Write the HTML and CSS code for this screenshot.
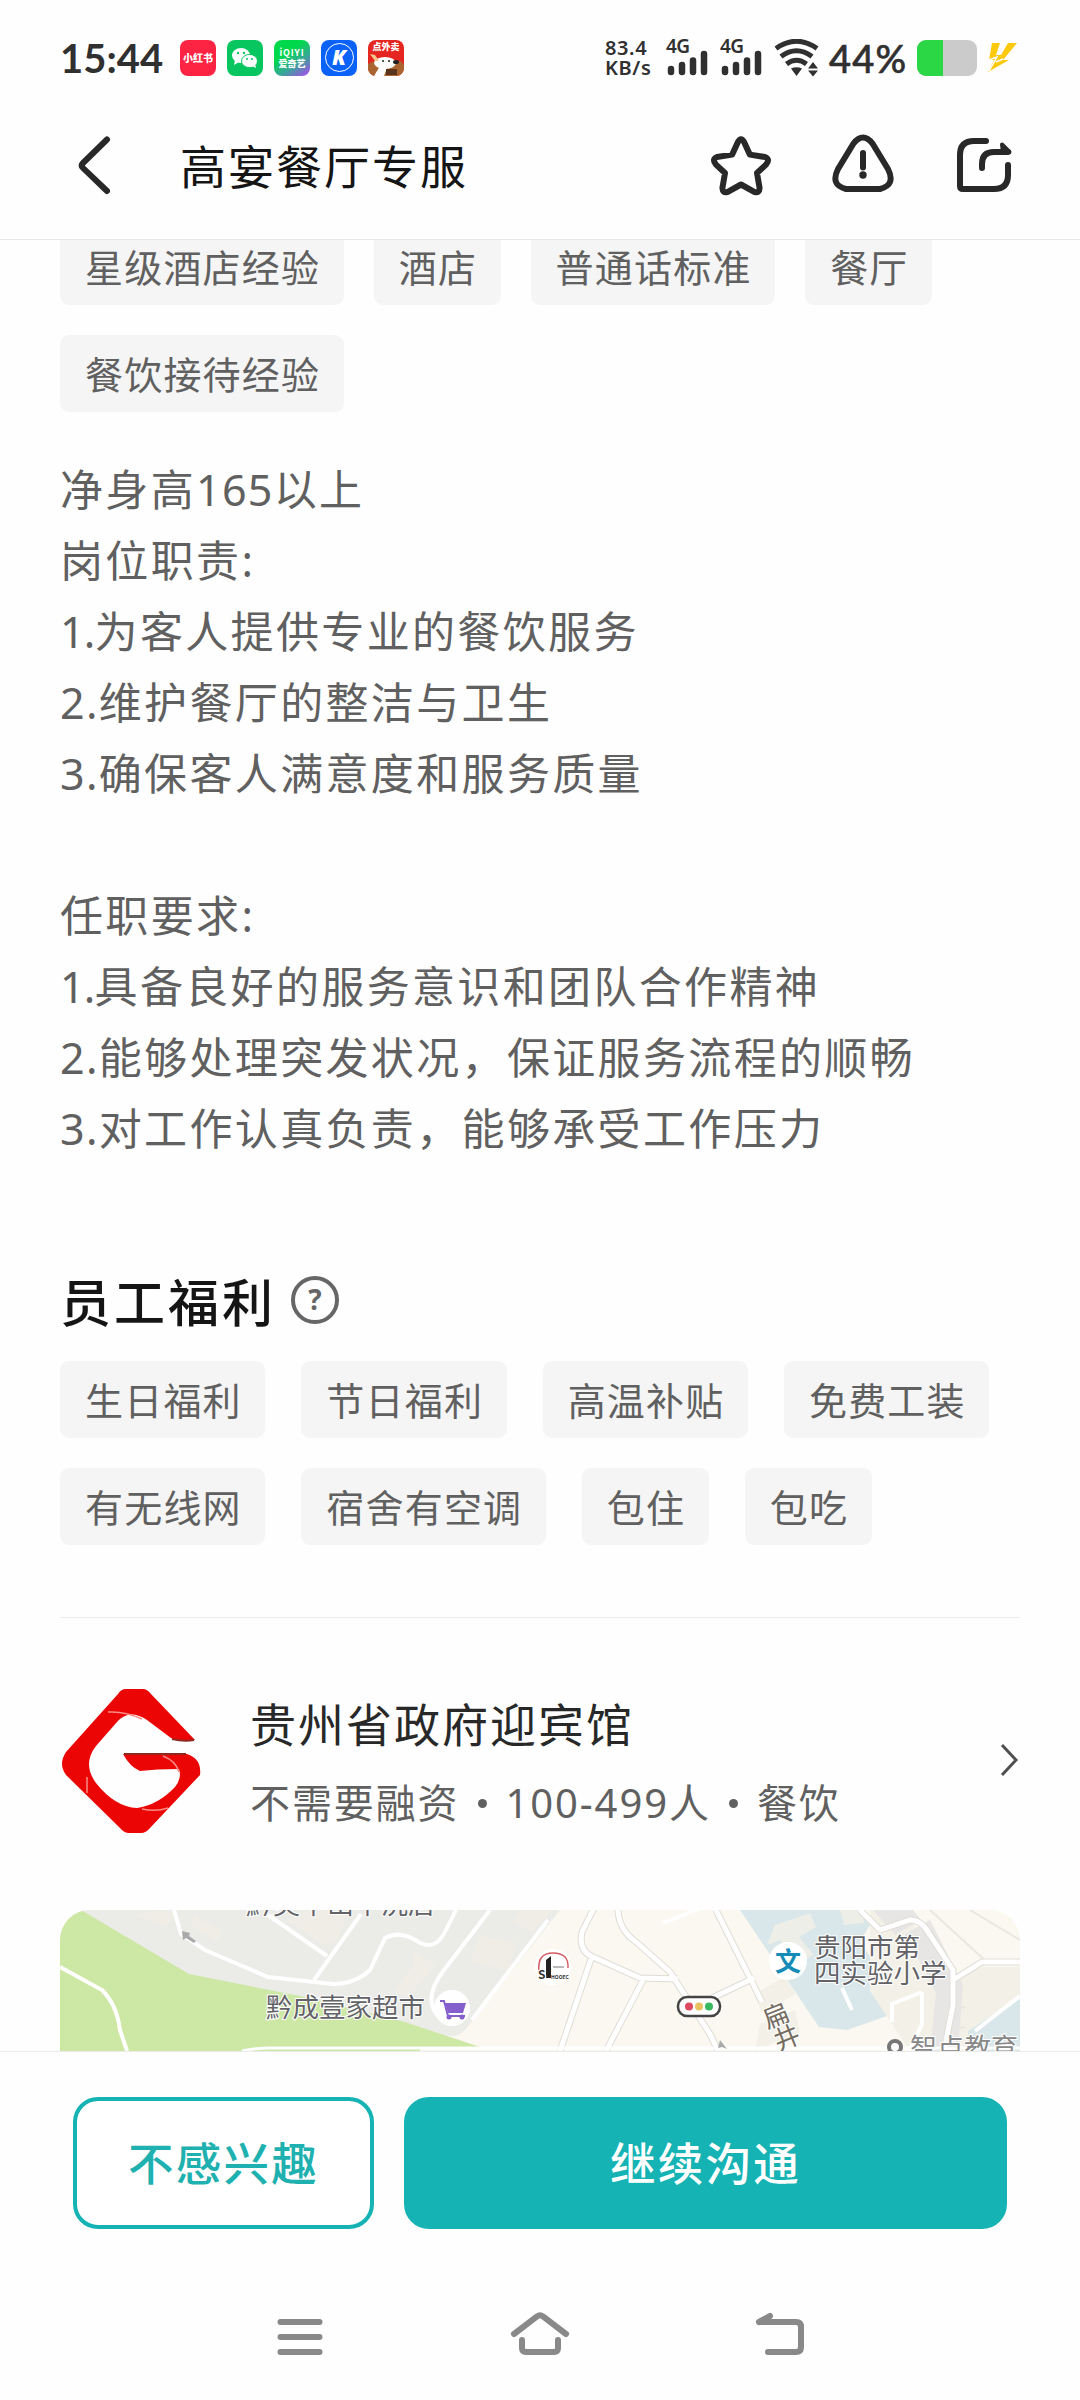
FILE: index.html
```html
<!DOCTYPE html>
<html lang="zh-CN">
<head>
    <meta charset="UTF-8">
    <meta name="viewport" content="width=device-width, initial-scale=1.0">
    <title>高宴餐厅专服</title>
    <link rel="stylesheet" href="styles.css">
</head>
<body>
    <div class="status-bar">
        <span class="time">15:44</span>
        <div class="apps">
            <span class="app app-red">小红书</span>
            <span class="app app-wechat">
                <svg width="36" height="36" viewBox="0 0 36 36">
                    <ellipse cx="14" cy="15.500" rx="9" ry="7.500" fill="#fff"/>
                    <path d="M8 20l-1 5 5-3z" fill="#fff"/>
                    <ellipse cx="22.500" cy="21" rx="8" ry="6.600" fill="#fff" stroke="#07c65f" stroke-width="1"/>
                    <path d="M25 26l4 2-1-4z" fill="#fff"/>
                    <circle cx="11" cy="13" r="1.200" fill="#07c65f"/>
                    <circle cx="17" cy="13" r="1.200" fill="#07c65f"/>
                    <circle cx="20" cy="19" r="1" fill="#07c65f"/>
                    <circle cx="25" cy="19" r="1" fill="#07c65f"/>
                </svg>
            </span>
            <span class="app app-iqiyi"><b class="latin">iQIYI</b><b>爱奇艺</b></span>
            <span class="app app-k"><i>K</i></span>
            <span class="app app-food">
                <b>点外卖</b>
                <svg width="36" height="22" viewBox="0 0 36 22">
                    <path d="M0 10Q8 5 14 7L33 7Q36 10 36 12V22H0z" fill="#a9642f"/>
                    <ellipse cx="17" cy="9" rx="11" ry="6" fill="#fff"/>
                    <path d="M7 7L2 0l5 1 4 6z" fill="#f4c58c"/>
                    <path d="M12 12l-6 10h10l3-8z" fill="#fff"/>
                    <circle cx="15" cy="7" r="1" fill="#222"/>
                    <circle cx="21" cy="7" r="1" fill="#222"/>
                    <ellipse cx="28" cy="8" rx="3" ry="2" fill="#222"/>
                    <rect x="18" y="15" width="11" height="6" fill="#5b351b"/>
                </svg>
            </span>
        </div>
        <div class="speed"><span>83.4</span><span>KB/s</span></div>
        <div class="signal">
            <span>4G</span>
            <svg width="42" height="26" viewBox="0 0 42 26"><path d="M4 19v3M15 15v7M26 10.500v11.500M37 4v18" stroke="#303030" stroke-width="6.500" stroke-linecap="round"/></svg>
        </div>
        <div class="signal">
            <span>4G</span>
            <svg width="42" height="26" viewBox="0 0 42 26"><path d="M4 19v3M15 15v7M26 10.500v11.500M37 4v18" stroke="#303030" stroke-width="6.500" stroke-linecap="round"/></svg>
        </div>
        <svg class="wifi" width="46" height="38" viewBox="0 0 46 38">
            <path d="M2 9.500Q22.500-5 43 9.500M7 17.500Q22.500 6 38 17.500M12.500 25Q22.500 17.500 32.500 25" fill="none" stroke="#303030" stroke-width="5"/>
            <path d="M17 29.500Q22.500 27 28 29.500L22.500 37z" fill="#303030"/>
            <path d="M34 29.500h10l-5-6.500zM34 31.500h10l-5 6z" fill="#303030"/>
        </svg>
        <span class="percent">44%</span>
        <div class="battery"><div class="level"></div></div>
        <svg class="bolt" width="31" height="31" viewBox="0 0 31 31">
            <path d="M5 1h8L9 13h5L21 1h9L16 18h6L1 30l6-12H2z" fill="#fcc90d"/>
            <path d="M2 18l8-3-8 14M16 17l-7 3" stroke="#fff" stroke-width="1.500" fill="none"/>
        </svg>
    </div>

    <header class="header">
        <svg class="back" width="36" height="60" viewBox="0 0 36 60"><path d="M30 3.500L6 27Q3.500 29.500 6 32L30 55" fill="none" stroke="#282828" stroke-width="6" stroke-linecap="round"/></svg>
        <h1>高宴餐厅专服</h1>
        <div class="actions">
            <svg width="64" height="64" viewBox="0 0 64 64">
                <path d="M28.700 8.400Q32 2 35.300 8.400L40.800 20.600L56 23Q61.500 25.200 57 30.600L48 39L50.600 54Q50.500 59.500 45.200 57.800L32 50.500L18.800 57.800Q13.500 59.500 13.400 54L16 39L7 30.600Q2.500 25.200 8 23L23.200 20.600Z"/>
            </svg>
            <svg width="64" height="64" viewBox="0 0 64 64">
                <path d="M22.500 9.500Q32-2.500 41.500 9.500L57 35Q65 51 49 55H15Q-1 51 7 35Z"/>
                <path d="M32 19v14.500"/><circle cx="32" cy="41" r="3.700" class="dot"/>
            </svg>
            <svg width="64" height="64" viewBox="0 0 64 64">
                <path d="M33 7H21Q7 7 7 21V52Q7 55 10 55H41Q55 55 55 41V31M29 34V30Q29 18 41 18H55"/>
                <path d="M49 10.500L56.500 18H50z" class="tip"/>
            </svg>
        </div>
    </header>

    <main class="content">
        <div class="tags skills">
            <span class="tag">星级酒店经验</span>
            <span class="tag">酒店</span>
            <span class="tag">普通话标准</span>
            <span class="tag">餐厅</span>
            <span class="tag">餐饮接待经验</span>
        </div>

        <div class="desc">
            <p>净身高<span class="num">165</span>以上</p>
            <p>岗位职责:</p>
            <p><span class="one">1.</span>为客人提供专业的餐饮服务</p>
            <p><span class="num">2.</span>维护餐厅的整洁与卫生</p>
            <p><span class="num">3.</span>确保客人满意度和服务质量</p>
            <p>&nbsp;</p>
            <p>任职要求:</p>
            <p><span class="one">1.</span>具备良好的服务意识和团队合作精神</p>
            <p><span class="num">2.</span>能够处理突发状况，保证服务流程的顺畅</p>
            <p><span class="num">3.</span>对工作认真负责，能够承受工作压力</p>
        </div>

        <div class="title">
            <h2>员工福利</h2>
            <span class="help">?</span>
        </div>
        <div class="tags benefits">
            <span class="tag">生日福利</span>
            <span class="tag">节日福利</span>
            <span class="tag">高温补贴</span>
            <span class="tag">免费工装</span>
            <span class="tag">有无线网</span>
            <span class="tag">宿舍有空调</span>
            <span class="tag">包住</span>
            <span class="tag">包吃</span>
        </div>

        <div class="company">
            <svg width="144" height="144" viewBox="0 0 144 144">
                <path d="M58 5Q61 0 66 0H83Q87 0 91 5L135 51Q118 53 111 49L87 31Q69 19 57 33L36 57Q22 75 36 94Q55 118 77 119Q98 116 115 98Q122 89 119 80Q96 80 80 82Q70 78 63 65H127Q142 70 140 86L90 139Q86 144 81 144H69Q64 144 60 139L6 86Q-2 75 6 63Z" fill="#ec0505"/>
                <path d="M48 23Q65 22 82 30M27 88V104M82 120Q96 123 108 119M103 67Q116 72 119 83" fill="none" stroke="#f98c86" stroke-width="1.500"/>
                <path d="M64 65H126M112 50Q124 53 134 51" fill="none" stroke="#8f2920" stroke-width="2"/>
            </svg>
            <div class="company-info">
                <h3>贵州省政府迎宾馆</h3>
                <p>不需要融资<i></i>100-499人<i></i>餐饮</p>
            </div>
            <svg class="arrow" width="20" height="34" viewBox="0 0 20 34"><path d="M2 2l14 15L2 32" fill="none" stroke="#505050" stroke-width="3"/></svg>
        </div>

        <div class="map">
            <svg width="960" height="141" viewBox="0 0 960 141">
                <rect width="960" height="141" fill="#faf8f0"/>
                <!-- blocks -->
                <path d="M0 0H500L405 120Q395 130 380 124L250 95L130 68L0 0z" fill="#ebebe8"/>
                <path d="M75 4l22-4 23 4-15 13zM135 6l28 15-6 10-26-15zM228 10l20-10h40l-10 30-13 6zM420 25l37 8-8 28-38-10zM352 40l24 15-28 32-14-6 20-27zM460 0h32l-20 22-20-10z" fill="#efede6"/>
                <path d="M0 0H21L129 64L240 86L345 112L423 138H360V141H0z" fill="#cde7a4"/>
                <path d="M680 0h118l12 15-10 17 47 67-60 21-28-3z" fill="#d9e7ea"/>
                <path d="M715 15l35-12 6 14-17 10 15 18-23 10-10-25-14 5zM780 0h22l2 13-20 2z" fill="#eeeee8"/>
                <path d="M810 0h35l26 43 22 26 30-12h37v84H850l-40-60zM695 83l30-16 11 17-35 19zM700 114l35-14 5 22-45 19z" fill="#f3f1e7"/>
                <path d="M813 0h40l8 10-26 15zM845 24l25-14 33 65-5 66h-28l6-58z" fill="#e7e6e4"/>
                <path d="M908 121l52-34v54h-52z" fill="#d9e7ea"/>
                <path d="M870 0l60 55M910 0l50 30M885 100l20-3M885 120l20-3" stroke="#e9e7df" stroke-width="2"/>
                <!-- roads, dark edge below the white one -->
                <g fill="none" stroke="#dfddd7" stroke-width="7">
                    <path d="M534-2L522 22Q518 41 533 47L580 68L618 69M558 0Q559 20 576 32L610 62L650 124L658 141M656 0L702 92M531 49L500 141M583 70L546 141M800 0L820 20M820 20L850 10Q862 10 870 25L893 60V95L884 141M893 70L922 52H960M694 68L652 88"/>
                </g>
                <g fill="none" stroke="#fff" stroke-width="5">
                    <path d="M534-2L522 22Q518 41 533 47L580 68L618 69M558 0Q559 20 576 32L610 62L650 124L658 141M656 0L702 92M531 49L500 141M583 70L546 141M800 0L820 20M820 20L850 10Q862 10 870 25L893 60V95L884 141M893 70L922 52H960M694 68L652 88"/>
                    <path d="M862 82v32l-13 27M862 82l-30 12v18M782 78l10 22M915 121L960 86M603 13l35-14" stroke-width="4"/>
                </g>
                <g fill="none" stroke="#fff" stroke-width="4">
                    <path d="M114 0L121 24L145 40L208 67L273 74Q295 74 310 60L325 28Q340 20 357 31Q375 43 386 20L396 0M208 5L267 46M301 4L254 70M430 0L384 60Q361 90 380 108M488 10L427 90L412 110"/>
                    <path d="M0 57L42 80Q57 95 60 120L67 141"/>
                </g>
                <path d="M182 141Q195 138 210 138H960" fill="none" stroke="#fff" stroke-width="3"/>
                <path d="M122 21l8 2-1 3 7 5-2 2-8-5-3 2z" fill="#aaa"/>
                <path d="M660 130l-2 8 4-1 5 2z" fill="#aaa"/>
                <circle cx="392" cy="98" r="18" fill="#fff"/>
                <path d="M380 91h4l4 15h17" fill="none" stroke="#8560cd" stroke-width="2"/>
                <path d="M385 93h21l-3 10h-15z" fill="#8560cd"/>
                <circle cx="389" cy="107" r="2.500" fill="#8560cd"/><circle cx="402" cy="107" r="2.500" fill="#8560cd"/>
                <circle cx="493" cy="57" r="18" fill="#fff"/>
                <path d="M479 61Q477 43 493 43Q509 43 508 58" fill="none" stroke="#d65b64" stroke-width="1.500"/>
                <path d="M486 50l5-4v22h-5z" fill="#222"/>
                <path d="M493 57h11" stroke="#777" stroke-width="1"/>
                <rect x="618" y="87" width="42" height="19" rx="9" fill="#fff" stroke="#444" stroke-width="2.500"/>
                <circle cx="629" cy="96.500" r="4" fill="#dd4961"/><circle cx="639" cy="96.500" r="4" fill="#eac160"/><circle cx="649" cy="96.500" r="4" fill="#38b861"/>
                <circle cx="728" cy="51" r="19" fill="#fff"/>
                <circle cx="835" cy="137" r="6" fill="#fff" stroke="#777" stroke-width="4"/>
                <g class="map-text">
                    <text x="186" y="4" font-size="27">黔灵半山半洗店</text>
                    <text x="206" y="107" font-size="26.500">黔成壹家超市</text>
                    <text x="754" y="47" font-size="26.500">贵阳市第</text>
                    <text x="754" y="73" font-size="26.500">四实验小学</text>
                    <text x="850" y="148" font-size="27" fill="#888">智点教育</text>
                    <text x="703" y="115" font-size="26" fill="#766d62" transform="rotate(-22 716 106)">扁</text>
                    <text x="714" y="137" font-size="26" fill="#766d62" transform="rotate(-22 727 128)">井</text>
                    <text x="715" y="61" font-size="26" fill="#168bb5" font-weight="700">文</text>
                    <text x="478" y="69" font-size="12" fill="#333" font-weight="700">S</text>
                    <text x="491" y="69" font-size="5" fill="#333" font-weight="700" stroke="none">HOOEC</text>
                </g>
            </svg>
        </div>
    </main>

    <footer class="bottom">
        <button class="btn btn-line">不感兴趣</button>
        <button class="btn btn-fill">继续沟通</button>
    </footer>

    <nav class="nav">
        <svg width="60" height="60" viewBox="0 0 60 60"><path d="M10.500 13h39M10.500 28h39M10.500 43h39"/></svg>
        <svg width="60" height="60" viewBox="0 0 60 60"><path d="M4 25L27 7.500Q30 5 33 7.500L56 25M12 31v8q0 4 4 4h28q4 0 4-4V31"/></svg>
        <svg width="60" height="60" viewBox="0 0 60 60"><path d="M9 13H46Q51 13 51 18V38Q51 43 46 43H18M9 13L20 7"/><path d="M9 13L20 7v6z" class="tip"/></svg>
    </nav>
</body>
</html>
```

FILE: styles.css
```css
*{
    margin: 0;
    padding: 0;
    box-sizing: border-box;
}
body {
    width: 1080px;
    height: 2400px;
    display: flex;
    flex-direction: column;
    overflow: hidden;
    background: #fefefe;
    font-family: "Noto Sans", "Noto Sans CJK SC", sans-serif;
}
svg {
    display: block;
    flex: none;
}
h1, h2, h3 {
    font-weight: 400;
}

/* status bar */
.status-bar {
    height: 98px;
    padding: 17px 60px 0 60px;
    display: flex;
    align-items: center;
    color: #303030;
    white-space: nowrap;
    flex: none;
}
.time {
    width: 120px;
    font-family: Lato, sans-serif;
    font-size: 40px;
    font-weight: 700;
    line-height: 50px;
}
.apps {
    display: flex;
    gap: 11px;
    width: 425px;
}
.app {
    width: 36px;
    height: 36px;
    border-radius: 8px;
    overflow: hidden;
    color: #fff;
    display: flex;
    flex-direction: column;
    align-items: center;
    justify-content: center;
    font-family: "Noto Sans CJK SC", sans-serif;
    font-weight: 900;
}
.app-red {
    background: #fc2442;
    font-size: 10px;
}
.app-wechat {
    background: #07c65f;
}
.app-iqiyi {
    background: linear-gradient(145deg, #00d84b 35%, #3aa59a 65%, #a052e8 95%);
    font-size: 9px;
    line-height: 11px;
}
.app-iqiyi .latin {
    font-weight: 700;
    letter-spacing: 0.8px;
}
.app-k {
    background: #0a62f8;
}
.app-k i {
    width: 29px;
    height: 29px;
    border: 1.5px solid #fff;
    border-radius: 50%;
    font-family: "Open Sans", sans-serif;
    font-size: 21px;
    font-weight: 800;
    line-height: 26px;
    text-align: center;
}
.app-food {
    background: #e5251f;
    font-size: 9px;
    line-height: 14px;
}
.speed {
    width: 61px;
    display: flex;
    flex-direction: column;
    font-size: 20px;
    font-weight: 600;
    letter-spacing: 0.6px;
    line-height: 20px;
}
.signal {
    width: 54px;
    height: 38px;
    position: relative;
    padding: 11px 0 0 1px;
}
.signal span {
    position: absolute;
    left: 0;
    top: -2px;
    font-size: 19px;
    font-weight: 600;
    line-height: 18px;
    letter-spacing: -0.5px;
}
.wifi {
    margin-right: 9px;
}
.percent {
    width: 88px;
    font-family: Lato, sans-serif;
    font-size: 38px;
    font-weight: 500;
    letter-spacing: 1.2px;
    -webkit-text-stroke: 0.6px #303030;
}
.battery {
    width: 60px;
    height: 36px;
    border-radius: 9px;
    background: #cbcbcb;
    overflow: hidden;
}
.battery .level {
    width: 26px;
    height: 36px;
    background: #2bd744;
}
.bolt {
    margin-left: 10px;
}

/* header */
.header {
    height: 142px;
    padding: 0 63px 5px 77px;
    display: flex;
    align-items: center;
    border-bottom: 1px solid #e8e8e8;
    flex: none;
}
.header h1 {
    margin-left: 67px;
    font-size: 46px;
    letter-spacing: 2px;
    color: #151515;
    line-height: 60px;
}
.actions {
    margin-left: auto;
    display: flex;
    gap: 58px;
}
.actions svg {
    fill: none;
    stroke: #282828;
    stroke-width: 6;
    stroke-linecap: round;
    stroke-linejoin: round;
}
.actions .dot {
    fill: #282828;
    stroke: none;
}
.actions .tip {
    fill: #282828;
    stroke-width: 4;
}

/* page content, scrolled under the header */
.content {
    height: 1811px;
    padding: 0 60px;
    overflow: hidden;
    flex: none;
}
.tags {
    display: flex;
    flex-wrap: wrap;
    gap: 30px;
}
.skills {
    margin-top: -12px;
}
.benefits {
    column-gap: 36px;
}
.tag {
    height: 77px;
    padding: 0 23.5px 0 25px;
    border-radius: 9px;
    background: #f5f5f5;
    color: #606060;
    font-size: 38px;
    letter-spacing: 1.2px;
    line-height: 78px;
}
.desc {
    margin-top: 42px;
    font-size: 43px;
    letter-spacing: 2.35px;
    line-height: 71px;
    color: #606060;
    white-space: nowrap;
}
.desc .num {
    letter-spacing: 1.3px;
}
.desc .one {
    letter-spacing: -0.8px;
}
.title {
    display: flex;
    align-items: center;
    gap: 15px;
    height: 80px;
    margin-top: 96px;
    margin-bottom: 21px;
}
.title h2 {
    font-size: 51px;
    font-weight: 500;
    letter-spacing: 3px;
    color: #151515;
}
.help {
    width: 48px;
    height: 48px;
    border: 4px solid #666;
    border-radius: 50%;
    color: #666;
    font-size: 28px;
    font-weight: 700;
    line-height: 39px;
    text-align: center;
}
.company {
    margin-top: 72px;
    padding-top: 71px;
    border-top: 1px solid #ebebeb;
    display: flex;
    align-items: flex-start;
    height: 220px;
}
.company-info {
    margin: -1px 0 0 46px;
}
.company-info h3 {
    font-size: 46px;
    letter-spacing: 2px;
    line-height: 72px;
    color: #282828;
}
.company-info p {
    display: flex;
    align-items: center;
    margin-top: 7px;
    font-size: 40px;
    letter-spacing: 1.9px;
    line-height: 72px;
    color: #606060;
}
.company-info i {
    width: 9px;
    height: 9px;
    margin: 0 18.5px;
    border-radius: 50%;
    background: #606060;
}
.arrow {
    margin: 54px 0 0 auto;
}
.map {
    margin-top: 73px;
    height: 141px;
    border-radius: 30px 30px 0 0;
    overflow: hidden;
}
.map-text {
    font-family: "Noto Sans CJK SC", sans-serif;
    fill: #626267;
    paint-order: stroke;
    stroke: #fff;
    stroke-width: 2px;
}

/* bottom buttons */
.bottom {
    height: 220px;
    padding: 45px 73px 0;
    border-top: 1px solid #ebebeb;
    display: flex;
    gap: 30px;
    flex: none;
}
.btn {
    height: 132px;
    border-radius: 25px;
    border: 4px solid #16b3b4;
    font-family: "Noto Sans CJK SC", sans-serif;
    font-size: 45.5px;
    font-weight: 500;
    letter-spacing: 2.3px;
    padding-bottom: 4px;
}
.btn-line {
    width: 301px;
    background: #fff;
    color: #1fb0b0;
}
.btn-fill {
    flex: 1;
    background: #16b3b4;
    color: #fff;
}

/* system navigation */
.nav {
    display: flex;
    justify-content: center;
    gap: 180px;
    padding-top: 38px;
}
.nav svg {
    fill: none;
    stroke: #898989;
    stroke-width: 6;
    stroke-linecap: round;
}
.nav .tip {
    fill: #898989;
    stroke: none;
}
```
